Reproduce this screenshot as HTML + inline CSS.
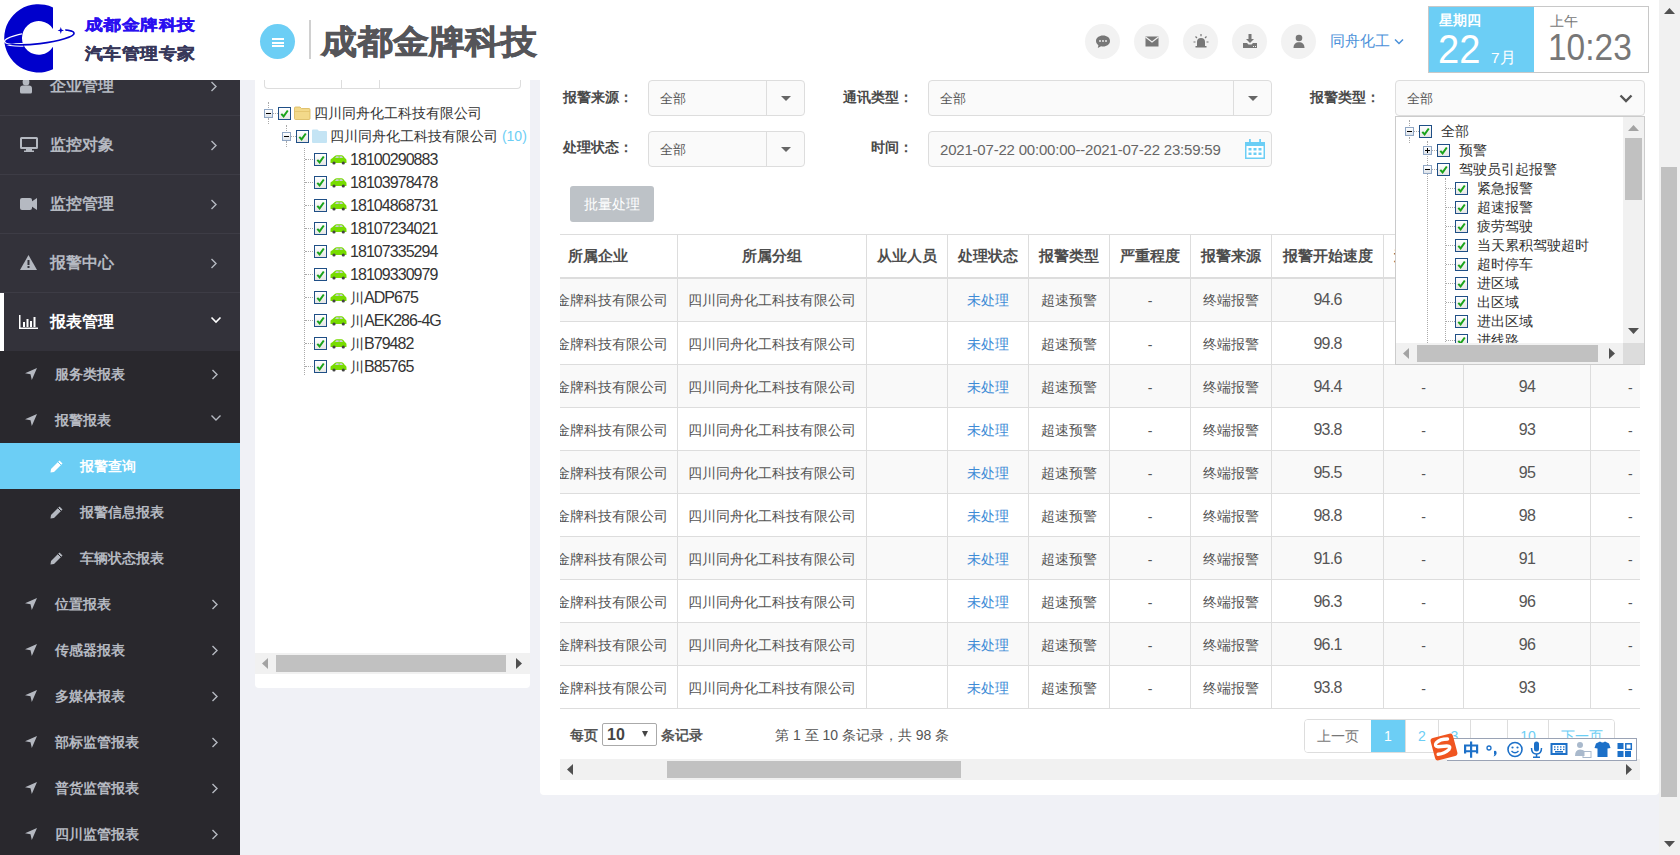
<!DOCTYPE html>
<html><head><meta charset="utf-8"><style>
*{box-sizing:border-box;margin:0;padding:0}
html,body{width:1680px;height:855px;overflow:hidden}
body{position:relative;background:#f0f1f6;font-family:"Liberation Sans",sans-serif;color:#555;font-size:14px}
.a{position:absolute}
.nw{white-space:nowrap}
#vs{left:1659px;top:0;width:21px;height:855px;background:#f1f1f1}
#vs .th{left:2px;top:167px;width:16px;height:630px;background:#c1c1c1}
#hd{left:0;top:0;width:1659px;height:80px;background:#fff}
#sb{left:0;top:80px;width:240px;height:775px;background:#29282d;overflow:hidden}
.mi{position:absolute;left:0;width:240px;height:59px;background:#33323a;border-bottom:1px solid #3d3c45;color:#b5b9c1;font-size:16px;font-weight:bold}
.mi .t{position:absolute;left:50px;top:0;line-height:58px;white-space:nowrap}
.si{position:absolute;left:0;width:240px;height:46px;color:#b5b9c1;font-size:14px;font-weight:bold}
.si .t{position:absolute;left:55px;top:0;line-height:46px;white-space:nowrap}
#tp{left:255px;top:40px;width:275px;height:648px;background:#fff;border-radius:4px}
#mp{left:540px;top:40px;width:1119px;height:755px;background:#fff;border-radius:4px}
.tr{position:absolute;height:23px;line-height:23px;font-size:14px;color:#333;white-space:nowrap}
.cb{position:absolute;width:13px;height:13px;border:1px solid #1f4f86;background:linear-gradient(#fff,#e6e6e6)}
.cb svg{position:absolute;left:1px;top:1px}
.pm{position:absolute;width:9px;height:9px;border:1px solid #8fa6c4;background:linear-gradient(#fff,#dde3ea)}
.pm:before{content:"";position:absolute;left:1px;top:3px;width:5px;height:1px;background:#000}
.pm.p:after{content:"";position:absolute;left:3px;top:1px;width:1px;height:5px;background:#000}
.dv{position:absolute;border-left:1px dotted #aaa;width:0}
.dh{position:absolute;border-top:1px dotted #aaa;height:0}
.lbl{position:absolute;font-size:14px;font-weight:bold;color:#4a4a4a;white-space:nowrap;line-height:20px}
.sel{position:absolute;height:36px;border:1px solid #ddd;border-radius:4px;background:#fafafa}
.sel .v{position:absolute;left:11px;top:0;line-height:36px;font-size:13px;color:#555}
.sel .dvd{position:absolute;top:0;width:1px;height:34px;background:#ddd}
.caret{position:absolute;width:0;height:0;border-left:5px solid transparent;border-right:5px solid transparent;border-top:5px solid #666}
table{border-collapse:collapse;table-layout:fixed}
td,th{border:1px solid #ddd;text-align:center;white-space:nowrap;overflow:hidden;font-size:14px;color:#555;padding:0}
th{height:43px;padding-top:2px;font-weight:bold;font-size:15px;border-bottom:2px solid #ddd;color:#4d4d4d}
td{height:43px;padding-top:3px}
tr.r1 td{height:44px}
tr.odd td{background:#f9f9f9}
.blue{color:#3d8bd6}
.n{font-size:16px;letter-spacing:-0.95px}
.nt{font-size:16px;letter-spacing:-0.75px;position:relative;top:-1px}
</style></head><body>
<div id="mp" class="a"></div><div class="lbl" style="left:563px;top:87px">报警来源：</div><div class="sel" style="left:648px;top:80px;width:157px"><div class="v">全部</div><div class="dvd" style="left:117px"></div><div class="caret" style="left:132px;top:15px"></div></div><div class="lbl" style="left:843px;top:87px">通讯类型：</div><div class="sel" style="left:928px;top:80px;width:344px"><div class="v">全部</div><div class="dvd" style="left:304px"></div><div class="caret" style="left:319px;top:15px"></div></div><div class="lbl" style="left:1310px;top:87px">报警类型：</div><div class="sel" style="left:1395px;top:80px;width:250px;height:36px"><div class="v">全部</div></div><svg class="a" style="left:1619px;top:94px" width="14" height="10" viewBox="0 0 14 10"><path d="M1.5 1.5 L7 7 L12.5 1.5" fill="none" stroke="#555" stroke-width="2.4"/></svg><div class="lbl" style="left:563px;top:137px">处理状态：</div><div class="sel" style="left:648px;top:131px;width:157px"><div class="v">全部</div><div class="dvd" style="left:117px"></div><div class="caret" style="left:132px;top:15px"></div></div><div class="lbl" style="left:871px;top:137px">时间：</div><div class="sel" style="left:928px;top:131px;width:344px;height:36px"><div class="v" style="font-size:15px;left:11px;letter-spacing:-0.2px;color:#666">2021-07-22 00:00:00--2021-07-22 23:59:59</div></div><svg class="a" style="left:1245px;top:139px" width="20" height="20" viewBox="0 0 20 20">
<path d="M0 3 H20 V20 H0Z" fill="#6ccef5"/><rect x="1.5" y="7" width="17" height="11.5" fill="#fff"/>
<rect x="4" y="0" width="1.8" height="5" fill="#6ccef5"/><rect x="14.2" y="0" width="1.8" height="5" fill="#6ccef5"/>
<g fill="#6ccef5"><rect x="3.5" y="9" width="3" height="2.5"/><rect x="8.5" y="9" width="3" height="2.5"/><rect x="13.5" y="9" width="3" height="2.5"/>
<rect x="3.5" y="13.5" width="3" height="2.5"/><rect x="8.5" y="13.5" width="3" height="2.5"/><rect x="13.5" y="13.5" width="3" height="2.5"/></g></svg><div class="a" style="left:570px;top:186px;width:84px;height:36px;background:#bdc2c7;border-radius:3px;color:#fff;font-size:14px;line-height:36px;text-align:center">批量处理</div><div class="a" style="left:560px;top:234px;width:1080px;height:475px;overflow:hidden"><table style="position:absolute;left:-43px;top:0;width:1224px"><colgroup><col style="width:160px"><col style="width:189px"><col style="width:81px"><col style="width:81px"><col style="width:81px"><col style="width:81px"><col style="width:81px"><col style="width:112px"><col style="width:80px"><col style="width:127px"><col style="width:150px"></colgroup><tr><th>所属企业</th><th>所属分组</th><th>从业人员</th><th>处理状态</th><th>报警类型</th><th>严重程度</th><th>报警来源</th><th>报警开始速度</th><th>速度限值</th><th>报警最高速度</th><th>报警持续</th></tr><tr class="odd r1"><td>成都金牌科技有限公司</td><td>四川同舟化工科技有限公司</td><td></td><td class="blue">未处理</td><td>超速预警</td><td>-</td><td>终端报警</td><td><span class="nt">94.6</span></td><td>-</td><td><span class="nt">94</span></td><td style="text-align:left;padding-left:37px">-</td></tr><tr><td>成都金牌科技有限公司</td><td>四川同舟化工科技有限公司</td><td></td><td class="blue">未处理</td><td>超速预警</td><td>-</td><td>终端报警</td><td><span class="nt">99.8</span></td><td>-</td><td><span class="nt">99</span></td><td style="text-align:left;padding-left:37px">-</td></tr><tr class="odd"><td>成都金牌科技有限公司</td><td>四川同舟化工科技有限公司</td><td></td><td class="blue">未处理</td><td>超速预警</td><td>-</td><td>终端报警</td><td><span class="nt">94.4</span></td><td>-</td><td><span class="nt">94</span></td><td style="text-align:left;padding-left:37px">-</td></tr><tr><td>成都金牌科技有限公司</td><td>四川同舟化工科技有限公司</td><td></td><td class="blue">未处理</td><td>超速预警</td><td>-</td><td>终端报警</td><td><span class="nt">93.8</span></td><td>-</td><td><span class="nt">93</span></td><td style="text-align:left;padding-left:37px">-</td></tr><tr class="odd"><td>成都金牌科技有限公司</td><td>四川同舟化工科技有限公司</td><td></td><td class="blue">未处理</td><td>超速预警</td><td>-</td><td>终端报警</td><td><span class="nt">95.5</span></td><td>-</td><td><span class="nt">95</span></td><td style="text-align:left;padding-left:37px">-</td></tr><tr><td>成都金牌科技有限公司</td><td>四川同舟化工科技有限公司</td><td></td><td class="blue">未处理</td><td>超速预警</td><td>-</td><td>终端报警</td><td><span class="nt">98.8</span></td><td>-</td><td><span class="nt">98</span></td><td style="text-align:left;padding-left:37px">-</td></tr><tr class="odd"><td>成都金牌科技有限公司</td><td>四川同舟化工科技有限公司</td><td></td><td class="blue">未处理</td><td>超速预警</td><td>-</td><td>终端报警</td><td><span class="nt">91.6</span></td><td>-</td><td><span class="nt">91</span></td><td style="text-align:left;padding-left:37px">-</td></tr><tr><td>成都金牌科技有限公司</td><td>四川同舟化工科技有限公司</td><td></td><td class="blue">未处理</td><td>超速预警</td><td>-</td><td>终端报警</td><td><span class="nt">96.3</span></td><td>-</td><td><span class="nt">96</span></td><td style="text-align:left;padding-left:37px">-</td></tr><tr class="odd"><td>成都金牌科技有限公司</td><td>四川同舟化工科技有限公司</td><td></td><td class="blue">未处理</td><td>超速预警</td><td>-</td><td>终端报警</td><td><span class="nt">96.1</span></td><td>-</td><td><span class="nt">96</span></td><td style="text-align:left;padding-left:37px">-</td></tr><tr><td>成都金牌科技有限公司</td><td>四川同舟化工科技有限公司</td><td></td><td class="blue">未处理</td><td>超速预警</td><td>-</td><td>终端报警</td><td><span class="nt">93.8</span></td><td>-</td><td><span class="nt">93</span></td><td style="text-align:left;padding-left:37px">-</td></tr></table></div><div class="a nw" style="left:570px;top:725px;font-size:14px;font-weight:bold;color:#555;line-height:20px">每页</div><div class="a" style="left:602px;top:723px;width:55px;height:23px;border:1px solid #aaa;border-radius:2px;background:#fff"></div><div class="a nw" style="left:607px;top:725px;font-size:16px;font-weight:bold;color:#444;line-height:20px">10</div><div class="a" style="left:642px;top:731px;width:0;height:0;border-left:3.5px solid transparent;border-right:3.5px solid transparent;border-top:6px solid #444"></div><div class="a nw" style="left:661px;top:725px;font-size:14px;font-weight:bold;color:#555;line-height:20px">条记录</div><div class="a nw" style="left:775px;top:725px;font-size:14px;color:#555;line-height:20px">第 1 至 10 条记录，共 98 条</div><div class="a" style="left:1304px;top:719px;width:311px;height:34px;border:1px solid #ddd;border-radius:4px;background:#fff;overflow:hidden"><div class="a" style="left:-1px;top:0;width:67px;height:32px;background:#fff;color:#777;text-align:center;line-height:32px;font-size:14px">上一页</div><div class="a" style="left:66px;top:0;width:34px;height:32px;background:#6ccef5;color:#fff;text-align:center;line-height:32px;font-size:14px">1</div><div class="a" style="left:100px;top:0;width:33px;height:32px;background:#fff;color:#6ccef5;border-left:1px solid #ddd;text-align:center;line-height:32px;font-size:14px">2</div><div class="a" style="left:133px;top:0;width:32px;height:32px;background:#fff;color:#6ccef5;border-left:1px solid #ddd;text-align:center;line-height:32px;font-size:14px">3</div><div class="a" style="left:165px;top:0;width:37px;height:32px;background:#fff;color:#6ccef5;border-left:1px solid #ddd;text-align:center;line-height:32px;font-size:14px">…</div><div class="a" style="left:202px;top:0;width:41px;height:32px;background:#fff;color:#6ccef5;border-left:1px solid #ddd;text-align:center;line-height:32px;font-size:14px">10</div><div class="a" style="left:243px;top:0;width:67px;height:32px;background:#fff;color:#6ccef5;border-left:1px solid #ddd;text-align:center;line-height:32px;font-size:14px">下一页</div></div><div class="a" style="left:560px;top:759px;width:1080px;height:21px;background:#f1f1f1"></div><div class="a" style="left:667px;top:761px;width:294px;height:17px;background:#c1c1c1"></div><svg class="a" style="left:567px;top:764px" width="6" height="11" viewBox="0 0 6 11"><path d="M6 0 L0 5.5 L6 11Z" fill="#505050"/></svg><svg class="a" style="left:1626px;top:764px" width="6" height="11" viewBox="0 0 6 11"><path d="M0 0 L6 5.5 L0 11Z" fill="#505050"/></svg><div class="a" style="left:1395px;top:116px;width:250px;height:249px;border:1px solid #ccc;background:#fff;overflow:hidden"><div class="dv" style="left:31px;top:24px;height:230px"></div><div class="dv" style="left:49px;top:61px;height:180px"></div><div class="dv" style="left:13px;top:3px;height:6px"></div><div class="dv" style="left:13px;top:20px;height:6px"></div><div class="pm" style="left:9px;top:10px"></div><div class="dh" style="left:18px;top:14px;width:5px"></div><div class="cb" style="left:23px;top:7.5px"><svg width="11" height="11" viewBox="0 0 11 11"><path d="M1.3 4.8 L3.6 7.4 L7.8 1.5" fill="none" stroke="#1aa31a" stroke-width="2"/></svg></div><div class="a nw" style="left:45px;top:4px;line-height:20px;font-size:14px;color:#333">全部</div><div class="pm p" style="left:27px;top:29px"></div><div class="dh" style="left:36px;top:33px;width:5px"></div><div class="cb" style="left:41px;top:26.5px"><svg width="11" height="11" viewBox="0 0 11 11"><path d="M1.3 4.8 L3.6 7.4 L7.8 1.5" fill="none" stroke="#1aa31a" stroke-width="2"/></svg></div><div class="a nw" style="left:63px;top:23px;line-height:20px;font-size:14px;color:#333">预警</div><div class="pm" style="left:27px;top:48px"></div><div class="dh" style="left:36px;top:52px;width:5px"></div><div class="cb" style="left:41px;top:45.5px"><svg width="11" height="11" viewBox="0 0 11 11"><path d="M1.3 4.8 L3.6 7.4 L7.8 1.5" fill="none" stroke="#1aa31a" stroke-width="2"/></svg></div><div class="a nw" style="left:63px;top:42px;line-height:20px;font-size:14px;color:#333">驾驶员引起报警</div><div class="dh" style="left:50px;top:71px;width:9px"></div><div class="cb" style="left:59px;top:64.5px"><svg width="11" height="11" viewBox="0 0 11 11"><path d="M1.3 4.8 L3.6 7.4 L7.8 1.5" fill="none" stroke="#1aa31a" stroke-width="2"/></svg></div><div class="a nw" style="left:81px;top:61px;line-height:20px;font-size:14px;color:#333">紧急报警</div><div class="dh" style="left:50px;top:90px;width:9px"></div><div class="cb" style="left:59px;top:83.5px"><svg width="11" height="11" viewBox="0 0 11 11"><path d="M1.3 4.8 L3.6 7.4 L7.8 1.5" fill="none" stroke="#1aa31a" stroke-width="2"/></svg></div><div class="a nw" style="left:81px;top:80px;line-height:20px;font-size:14px;color:#333">超速报警</div><div class="dh" style="left:50px;top:109px;width:9px"></div><div class="cb" style="left:59px;top:102.5px"><svg width="11" height="11" viewBox="0 0 11 11"><path d="M1.3 4.8 L3.6 7.4 L7.8 1.5" fill="none" stroke="#1aa31a" stroke-width="2"/></svg></div><div class="a nw" style="left:81px;top:99px;line-height:20px;font-size:14px;color:#333">疲劳驾驶</div><div class="dh" style="left:50px;top:128px;width:9px"></div><div class="cb" style="left:59px;top:121.5px"><svg width="11" height="11" viewBox="0 0 11 11"><path d="M1.3 4.8 L3.6 7.4 L7.8 1.5" fill="none" stroke="#1aa31a" stroke-width="2"/></svg></div><div class="a nw" style="left:81px;top:118px;line-height:20px;font-size:14px;color:#333">当天累积驾驶超时</div><div class="dh" style="left:50px;top:147px;width:9px"></div><div class="cb" style="left:59px;top:140.5px"><svg width="11" height="11" viewBox="0 0 11 11"><path d="M1.3 4.8 L3.6 7.4 L7.8 1.5" fill="none" stroke="#1aa31a" stroke-width="2"/></svg></div><div class="a nw" style="left:81px;top:137px;line-height:20px;font-size:14px;color:#333">超时停车</div><div class="dh" style="left:50px;top:166px;width:9px"></div><div class="cb" style="left:59px;top:159.5px"><svg width="11" height="11" viewBox="0 0 11 11"><path d="M1.3 4.8 L3.6 7.4 L7.8 1.5" fill="none" stroke="#1aa31a" stroke-width="2"/></svg></div><div class="a nw" style="left:81px;top:156px;line-height:20px;font-size:14px;color:#333">进区域</div><div class="dh" style="left:50px;top:185px;width:9px"></div><div class="cb" style="left:59px;top:178.5px"><svg width="11" height="11" viewBox="0 0 11 11"><path d="M1.3 4.8 L3.6 7.4 L7.8 1.5" fill="none" stroke="#1aa31a" stroke-width="2"/></svg></div><div class="a nw" style="left:81px;top:175px;line-height:20px;font-size:14px;color:#333">出区域</div><div class="dh" style="left:50px;top:204px;width:9px"></div><div class="cb" style="left:59px;top:197.5px"><svg width="11" height="11" viewBox="0 0 11 11"><path d="M1.3 4.8 L3.6 7.4 L7.8 1.5" fill="none" stroke="#1aa31a" stroke-width="2"/></svg></div><div class="a nw" style="left:81px;top:194px;line-height:20px;font-size:14px;color:#333">进出区域</div><div class="dh" style="left:50px;top:223px;width:9px"></div><div class="cb" style="left:59px;top:216.5px"><svg width="11" height="11" viewBox="0 0 11 11"><path d="M1.3 4.8 L3.6 7.4 L7.8 1.5" fill="none" stroke="#1aa31a" stroke-width="2"/></svg></div><div class="a nw" style="left:81px;top:213px;line-height:20px;font-size:14px;color:#333">进线路</div><div class="a" style="left:227px;top:0;width:21px;height:227px;background:#f1f1f1"></div><div class="a" style="left:229px;top:21px;width:17px;height:62px;background:#c1c1c1"></div><svg class="a" style="left:232px;top:8px" width="11" height="6" viewBox="0 0 11 6"><path d="M0 6 L5.5 0 L11 6Z" fill="#a3a3a3"/></svg><svg class="a" style="left:232px;top:211px" width="11" height="6" viewBox="0 0 11 6"><path d="M0 0 L5.5 6 L11 0Z" fill="#505050"/></svg><div class="a" style="left:0;top:226px;width:249px;height:21px;background:#f1f1f1"></div><div class="a" style="left:227px;top:226px;width:21px;height:21px;background:#dcdcdc"></div><div class="a" style="left:21px;top:228px;width:181px;height:17px;background:#c1c1c1"></div><svg class="a" style="left:7px;top:231px" width="6" height="11" viewBox="0 0 6 11"><path d="M6 0 L0 5.5 L6 11Z" fill="#a3a3a3"/></svg><svg class="a" style="left:213px;top:231px" width="6" height="11" viewBox="0 0 6 11"><path d="M0 0 L6 5.5 L0 11Z" fill="#505050"/></svg></div><div id="tp" class="a"></div><div class="a" style="left:264px;top:40px;width:257px;height:49px;border:1px solid #ddd;border-top:none;border-radius:0 0 4px 4px"></div><div class="a" style="left:341px;top:40px;width:1px;height:48px;background:#ddd"></div><div class="a" style="left:379px;top:40px;width:1px;height:48px;background:#ddd"></div><div class="dv" style="left:268px;top:102px;height:6px"></div><div class="dv" style="left:268px;top:118px;height:6px"></div><div class="dh" style="left:273px;top:113px;width:5px"></div><div class="pm" style="left:264px;top:109px"></div><div class="cb" style="left:278px;top:107px"><svg width="11" height="11" viewBox="0 0 11 11"><path d="M1.3 4.8 L3.6 7.4 L7.8 1.5" fill="none" stroke="#1aa31a" stroke-width="2"/></svg></div><div class="a" style="left:294px;top:106px"><svg class="a" width="17" height="14" viewBox="0 0 17 14"><path d="M0.5 2 Q0.5 1 1.5 1 H6 L7.5 2.5 H15 Q16 2.5 16 3.5 V12.5 Q16 13.5 15 13.5 H1.5 Q0.5 13.5 0.5 12.5Z" fill="#f3d98a" stroke="#d9b75a" stroke-width="0.8"/><path d="M0.5 5.5 H16" stroke="#e2c36c" stroke-width="0.8"/></svg></div><div class="tr" style="left:314px;top:102px">四川同舟化工科技有限公司</div><div class="dv" style="left:286px;top:125px;height:6px"></div><div class="dv" style="left:286px;top:141px;height:6px"></div><div class="dh" style="left:291px;top:136px;width:5px"></div><div class="pm" style="left:282px;top:132px"></div><div class="cb" style="left:296px;top:130px"><svg width="11" height="11" viewBox="0 0 11 11"><path d="M1.3 4.8 L3.6 7.4 L7.8 1.5" fill="none" stroke="#1aa31a" stroke-width="2"/></svg></div><div class="a" style="left:312px;top:129px"><svg class="a" width="15" height="14" viewBox="0 0 15 14"><path d="M0 1.5 Q0 0.5 1 0.5 H5.5 L7 2 H14 Q15 2 15 3 V13 Q15 14 14 14 H1 Q0 14 0 13Z" fill="#c4e4f4"/></svg></div><div class="tr" style="left:330px;top:125px">四川同舟化工科技有限公司 <span style="color:#6ccef5">(10)</span></div><div class="dv" style="left:304px;top:148px;height:227px"></div><div class="dh" style="left:305px;top:159px;width:8px"></div><div class="cb" style="left:314px;top:153px"><svg width="11" height="11" viewBox="0 0 11 11"><path d="M1.3 4.8 L3.6 7.4 L7.8 1.5" fill="none" stroke="#1aa31a" stroke-width="2"/></svg></div><div class="a" style="left:330px;top:155px"><svg class="a" width="17" height="10" viewBox="0 0 17 10"><path d="M0.5 5 Q0.5 3.8 2 3.5 L4.5 1.2 Q5.5 0.3 7 0.3 H11.5 Q12.5 0.3 13.5 1.3 L15 3.2 Q16.5 3.8 16.5 5.5 V7.5 Q16.5 8 16 8 H1 Q0.5 8 0.5 7.5Z" fill="#78dc00"/><path d="M5 3 L6.3 1.3 H8.7 V3Z M9.5 1.3 H12 L13 3 H9.5Z" fill="#c8ccd8"/><circle cx="4" cy="8" r="1.6" fill="#444"/><circle cx="13.3" cy="8" r="1.6" fill="#444"/></svg></div><div class="tr" style="left:350px;top:148px"><span class="n">18100290883</span></div><div class="dh" style="left:305px;top:182px;width:8px"></div><div class="cb" style="left:314px;top:176px"><svg width="11" height="11" viewBox="0 0 11 11"><path d="M1.3 4.8 L3.6 7.4 L7.8 1.5" fill="none" stroke="#1aa31a" stroke-width="2"/></svg></div><div class="a" style="left:330px;top:178px"><svg class="a" width="17" height="10" viewBox="0 0 17 10"><path d="M0.5 5 Q0.5 3.8 2 3.5 L4.5 1.2 Q5.5 0.3 7 0.3 H11.5 Q12.5 0.3 13.5 1.3 L15 3.2 Q16.5 3.8 16.5 5.5 V7.5 Q16.5 8 16 8 H1 Q0.5 8 0.5 7.5Z" fill="#78dc00"/><path d="M5 3 L6.3 1.3 H8.7 V3Z M9.5 1.3 H12 L13 3 H9.5Z" fill="#c8ccd8"/><circle cx="4" cy="8" r="1.6" fill="#444"/><circle cx="13.3" cy="8" r="1.6" fill="#444"/></svg></div><div class="tr" style="left:350px;top:171px"><span class="n">18103978478</span></div><div class="dh" style="left:305px;top:205px;width:8px"></div><div class="cb" style="left:314px;top:199px"><svg width="11" height="11" viewBox="0 0 11 11"><path d="M1.3 4.8 L3.6 7.4 L7.8 1.5" fill="none" stroke="#1aa31a" stroke-width="2"/></svg></div><div class="a" style="left:330px;top:201px"><svg class="a" width="17" height="10" viewBox="0 0 17 10"><path d="M0.5 5 Q0.5 3.8 2 3.5 L4.5 1.2 Q5.5 0.3 7 0.3 H11.5 Q12.5 0.3 13.5 1.3 L15 3.2 Q16.5 3.8 16.5 5.5 V7.5 Q16.5 8 16 8 H1 Q0.5 8 0.5 7.5Z" fill="#78dc00"/><path d="M5 3 L6.3 1.3 H8.7 V3Z M9.5 1.3 H12 L13 3 H9.5Z" fill="#c8ccd8"/><circle cx="4" cy="8" r="1.6" fill="#444"/><circle cx="13.3" cy="8" r="1.6" fill="#444"/></svg></div><div class="tr" style="left:350px;top:194px"><span class="n">18104868731</span></div><div class="dh" style="left:305px;top:228px;width:8px"></div><div class="cb" style="left:314px;top:222px"><svg width="11" height="11" viewBox="0 0 11 11"><path d="M1.3 4.8 L3.6 7.4 L7.8 1.5" fill="none" stroke="#1aa31a" stroke-width="2"/></svg></div><div class="a" style="left:330px;top:224px"><svg class="a" width="17" height="10" viewBox="0 0 17 10"><path d="M0.5 5 Q0.5 3.8 2 3.5 L4.5 1.2 Q5.5 0.3 7 0.3 H11.5 Q12.5 0.3 13.5 1.3 L15 3.2 Q16.5 3.8 16.5 5.5 V7.5 Q16.5 8 16 8 H1 Q0.5 8 0.5 7.5Z" fill="#78dc00"/><path d="M5 3 L6.3 1.3 H8.7 V3Z M9.5 1.3 H12 L13 3 H9.5Z" fill="#c8ccd8"/><circle cx="4" cy="8" r="1.6" fill="#444"/><circle cx="13.3" cy="8" r="1.6" fill="#444"/></svg></div><div class="tr" style="left:350px;top:217px"><span class="n">18107234021</span></div><div class="dh" style="left:305px;top:251px;width:8px"></div><div class="cb" style="left:314px;top:245px"><svg width="11" height="11" viewBox="0 0 11 11"><path d="M1.3 4.8 L3.6 7.4 L7.8 1.5" fill="none" stroke="#1aa31a" stroke-width="2"/></svg></div><div class="a" style="left:330px;top:247px"><svg class="a" width="17" height="10" viewBox="0 0 17 10"><path d="M0.5 5 Q0.5 3.8 2 3.5 L4.5 1.2 Q5.5 0.3 7 0.3 H11.5 Q12.5 0.3 13.5 1.3 L15 3.2 Q16.5 3.8 16.5 5.5 V7.5 Q16.5 8 16 8 H1 Q0.5 8 0.5 7.5Z" fill="#78dc00"/><path d="M5 3 L6.3 1.3 H8.7 V3Z M9.5 1.3 H12 L13 3 H9.5Z" fill="#c8ccd8"/><circle cx="4" cy="8" r="1.6" fill="#444"/><circle cx="13.3" cy="8" r="1.6" fill="#444"/></svg></div><div class="tr" style="left:350px;top:240px"><span class="n">18107335294</span></div><div class="dh" style="left:305px;top:274px;width:8px"></div><div class="cb" style="left:314px;top:268px"><svg width="11" height="11" viewBox="0 0 11 11"><path d="M1.3 4.8 L3.6 7.4 L7.8 1.5" fill="none" stroke="#1aa31a" stroke-width="2"/></svg></div><div class="a" style="left:330px;top:270px"><svg class="a" width="17" height="10" viewBox="0 0 17 10"><path d="M0.5 5 Q0.5 3.8 2 3.5 L4.5 1.2 Q5.5 0.3 7 0.3 H11.5 Q12.5 0.3 13.5 1.3 L15 3.2 Q16.5 3.8 16.5 5.5 V7.5 Q16.5 8 16 8 H1 Q0.5 8 0.5 7.5Z" fill="#78dc00"/><path d="M5 3 L6.3 1.3 H8.7 V3Z M9.5 1.3 H12 L13 3 H9.5Z" fill="#c8ccd8"/><circle cx="4" cy="8" r="1.6" fill="#444"/><circle cx="13.3" cy="8" r="1.6" fill="#444"/></svg></div><div class="tr" style="left:350px;top:263px"><span class="n">18109330979</span></div><div class="dh" style="left:305px;top:297px;width:8px"></div><div class="cb" style="left:314px;top:291px"><svg width="11" height="11" viewBox="0 0 11 11"><path d="M1.3 4.8 L3.6 7.4 L7.8 1.5" fill="none" stroke="#1aa31a" stroke-width="2"/></svg></div><div class="a" style="left:330px;top:293px"><svg class="a" width="17" height="10" viewBox="0 0 17 10"><path d="M0.5 5 Q0.5 3.8 2 3.5 L4.5 1.2 Q5.5 0.3 7 0.3 H11.5 Q12.5 0.3 13.5 1.3 L15 3.2 Q16.5 3.8 16.5 5.5 V7.5 Q16.5 8 16 8 H1 Q0.5 8 0.5 7.5Z" fill="#78dc00"/><path d="M5 3 L6.3 1.3 H8.7 V3Z M9.5 1.3 H12 L13 3 H9.5Z" fill="#c8ccd8"/><circle cx="4" cy="8" r="1.6" fill="#444"/><circle cx="13.3" cy="8" r="1.6" fill="#444"/></svg></div><div class="tr" style="left:350px;top:286px">川<span class="n">ADP675</span></div><div class="dh" style="left:305px;top:320px;width:8px"></div><div class="cb" style="left:314px;top:314px"><svg width="11" height="11" viewBox="0 0 11 11"><path d="M1.3 4.8 L3.6 7.4 L7.8 1.5" fill="none" stroke="#1aa31a" stroke-width="2"/></svg></div><div class="a" style="left:330px;top:316px"><svg class="a" width="17" height="10" viewBox="0 0 17 10"><path d="M0.5 5 Q0.5 3.8 2 3.5 L4.5 1.2 Q5.5 0.3 7 0.3 H11.5 Q12.5 0.3 13.5 1.3 L15 3.2 Q16.5 3.8 16.5 5.5 V7.5 Q16.5 8 16 8 H1 Q0.5 8 0.5 7.5Z" fill="#78dc00"/><path d="M5 3 L6.3 1.3 H8.7 V3Z M9.5 1.3 H12 L13 3 H9.5Z" fill="#c8ccd8"/><circle cx="4" cy="8" r="1.6" fill="#444"/><circle cx="13.3" cy="8" r="1.6" fill="#444"/></svg></div><div class="tr" style="left:350px;top:309px">川<span class="n">AEK286-4G</span></div><div class="dh" style="left:305px;top:343px;width:8px"></div><div class="cb" style="left:314px;top:337px"><svg width="11" height="11" viewBox="0 0 11 11"><path d="M1.3 4.8 L3.6 7.4 L7.8 1.5" fill="none" stroke="#1aa31a" stroke-width="2"/></svg></div><div class="a" style="left:330px;top:339px"><svg class="a" width="17" height="10" viewBox="0 0 17 10"><path d="M0.5 5 Q0.5 3.8 2 3.5 L4.5 1.2 Q5.5 0.3 7 0.3 H11.5 Q12.5 0.3 13.5 1.3 L15 3.2 Q16.5 3.8 16.5 5.5 V7.5 Q16.5 8 16 8 H1 Q0.5 8 0.5 7.5Z" fill="#78dc00"/><path d="M5 3 L6.3 1.3 H8.7 V3Z M9.5 1.3 H12 L13 3 H9.5Z" fill="#c8ccd8"/><circle cx="4" cy="8" r="1.6" fill="#444"/><circle cx="13.3" cy="8" r="1.6" fill="#444"/></svg></div><div class="tr" style="left:350px;top:332px">川<span class="n">B79482</span></div><div class="dh" style="left:305px;top:366px;width:8px"></div><div class="cb" style="left:314px;top:360px"><svg width="11" height="11" viewBox="0 0 11 11"><path d="M1.3 4.8 L3.6 7.4 L7.8 1.5" fill="none" stroke="#1aa31a" stroke-width="2"/></svg></div><div class="a" style="left:330px;top:362px"><svg class="a" width="17" height="10" viewBox="0 0 17 10"><path d="M0.5 5 Q0.5 3.8 2 3.5 L4.5 1.2 Q5.5 0.3 7 0.3 H11.5 Q12.5 0.3 13.5 1.3 L15 3.2 Q16.5 3.8 16.5 5.5 V7.5 Q16.5 8 16 8 H1 Q0.5 8 0.5 7.5Z" fill="#78dc00"/><path d="M5 3 L6.3 1.3 H8.7 V3Z M9.5 1.3 H12 L13 3 H9.5Z" fill="#c8ccd8"/><circle cx="4" cy="8" r="1.6" fill="#444"/><circle cx="13.3" cy="8" r="1.6" fill="#444"/></svg></div><div class="tr" style="left:350px;top:355px">川<span class="n">B85765</span></div><div class="a" style="left:255px;top:653px;width:275px;height:21px;background:#f1f1f1"></div><div class="a" style="left:276px;top:655px;width:230px;height:17px;background:#c1c1c1"></div><svg class="a" style="left:262px;top:658px" width="6" height="11" viewBox="0 0 6 11"><path d="M6 0 L0 5.5 L6 11Z" fill="#a3a3a3"/></svg><svg class="a" style="left:516px;top:658px" width="6" height="11" viewBox="0 0 6 11"><path d="M0 0 L6 5.5 L0 11Z" fill="#505050"/></svg><div id="sb" class="a"><div class="mi" style="top:-23px"><svg class="a" style="left:20px;top:18px" width="12" height="19" viewBox="0 0 12 19"><ellipse cx="6" cy="7" rx="3.4" ry="3.6" fill="#b5b9c1"/><path d="M0 17 V13.5 Q0 10.5 3 10.5 H9 Q12 10.5 12 13.5 V17 Q12 18.5 10.5 18.5 H1.5 Q0 18.5 0 17Z" fill="#b5b9c1"/></svg><div class="t">企业管理</div><svg class="a" style="left:210px;top:24px" width="8" height="11" viewBox="0 0 8 11"><path d="M1.5 1 L6 5.5 L1.5 10" fill="none" stroke="#b5b9c1" stroke-width="1.4"/></svg></div><div class="mi" style="top:36px"><svg class="a" style="left:20px;top:21px" width="18" height="15" viewBox="0 0 18 15"><path fill-rule="evenodd" fill="#b5b9c1" d="M0 1.5Q0 0 1.5 0h15Q18 0 18 1.5v9Q18 12 16.5 12h-15Q0 12 0 10.5zM2 2v8h14V2z"/><path fill="#b5b9c1" d="M6 12h6v1.5h2V15H4v-1.5h2z"/></svg><div class="t">监控对象</div><svg class="a" style="left:210px;top:24px" width="8" height="11" viewBox="0 0 8 11"><path d="M1.5 1 L6 5.5 L1.5 10" fill="none" stroke="#b5b9c1" stroke-width="1.4"/></svg></div><div class="mi" style="top:95px"><svg class="a" style="left:20px;top:23px" width="17" height="12" viewBox="0 0 17 12"><rect x="0" y="0" width="12" height="12" rx="2" fill="#b5b9c1"/><path d="M11 4 L17 0 V12 L11 8Z" fill="#b5b9c1"/></svg><div class="t">监控管理</div><svg class="a" style="left:210px;top:24px" width="8" height="11" viewBox="0 0 8 11"><path d="M1.5 1 L6 5.5 L1.5 10" fill="none" stroke="#b5b9c1" stroke-width="1.4"/></svg></div><div class="mi" style="top:154px"><svg class="a" style="left:20px;top:21px" width="17" height="15" viewBox="0 0 17 15"><path d="M8.5 0 L17 15 H0Z" fill="#b5b9c1"/><rect x="7.5" y="5" width="2" height="5" fill="#33323a"/><rect x="7.5" y="11" width="2" height="2" fill="#33323a"/></svg><div class="t">报警中心</div><svg class="a" style="left:210px;top:24px" width="8" height="11" viewBox="0 0 8 11"><path d="M1.5 1 L6 5.5 L1.5 10" fill="none" stroke="#b5b9c1" stroke-width="1.4"/></svg></div><div class="mi" style="top:213px;height:58px;border-bottom:none;color:#fff"><svg class="a" style="left:19px;top:22px" width="19" height="14" viewBox="0 0 19 14"><path d="M0.75 0V13.25H19" fill="none" stroke="#fff" stroke-width="1.5"/><rect x="4" y="7" width="2" height="5" fill="#fff"/><rect x="7.5" y="4" width="2" height="8" fill="#fff"/><rect x="11" y="6" width="2" height="6" fill="#fff"/><rect x="14.5" y="2" width="2" height="10" fill="#fff"/></svg><div class="t">报表管理</div><div class="a" style="left:0;top:0;width:4px;height:58px;background:#fff"></div><svg class="a" style="left:209.5px;top:22.5px" width="12" height="8" viewBox="0 0 12 8"><path d="M1.5 1.5 L6 6 L10.5 1.5" fill="none" stroke="#fff" stroke-width="1.6"/></svg></div><div class="si" style="top:271px"><svg class="a" style="left:25px;top:17px" width="12" height="12" viewBox="0 0 12 12"><path d="M12 0 L0 5.2 L5.5 6.3 L6.8 12Z" fill="#b5b9c1"/></svg><div class="t">服务类报表</div><svg class="a" style="left:211px;top:18px" width="8" height="11" viewBox="0 0 8 11"><path d="M1.5 1 L6 5.5 L1.5 10" fill="none" stroke="#b5b9c1" stroke-width="1.4"/></svg></div><div class="si" style="top:317px"><svg class="a" style="left:25px;top:17px" width="12" height="12" viewBox="0 0 12 12"><path d="M12 0 L0 5.2 L5.5 6.3 L6.8 12Z" fill="#b5b9c1"/></svg><div class="t">报警报表</div><svg class="a" style="left:209.5px;top:16.5px" width="12" height="8" viewBox="0 0 12 8"><path d="M1.5 1.5 L6 6 L10.5 1.5" fill="none" stroke="#b5b9c1" stroke-width="1.4"/></svg></div><div class="si" style="top:363px;background:#6ccef5;color:#fff"><svg class="a" style="left:50px;top:17px" width="13" height="13" viewBox="0 0 13 13"><path d="M9.5 0.5 L12.5 3.5 L4 12 L0.5 12.5 L1 9Z" fill="#fff"/><path d="M8 2 L11 5" stroke="#6ccef5" stroke-width="1"/></svg><div class="t" style="left:80px">报警查询</div></div><div class="si" style="top:409px"><svg class="a" style="left:50px;top:17px" width="13" height="13" viewBox="0 0 13 13"><path d="M9.5 0.5 L12.5 3.5 L4 12 L0.5 12.5 L1 9Z" fill="#b5b9c1"/><path d="M8 2 L11 5" stroke="#29282d" stroke-width="1"/></svg><div class="t" style="left:80px">报警信息报表</div></div><div class="si" style="top:455px"><svg class="a" style="left:50px;top:17px" width="13" height="13" viewBox="0 0 13 13"><path d="M9.5 0.5 L12.5 3.5 L4 12 L0.5 12.5 L1 9Z" fill="#b5b9c1"/><path d="M8 2 L11 5" stroke="#29282d" stroke-width="1"/></svg><div class="t" style="left:80px">车辆状态报表</div></div><div class="si" style="top:501px"><svg class="a" style="left:25px;top:17px" width="12" height="12" viewBox="0 0 12 12"><path d="M12 0 L0 5.2 L5.5 6.3 L6.8 12Z" fill="#b5b9c1"/></svg><div class="t">位置报表</div><svg class="a" style="left:211px;top:18px" width="8" height="11" viewBox="0 0 8 11"><path d="M1.5 1 L6 5.5 L1.5 10" fill="none" stroke="#b5b9c1" stroke-width="1.4"/></svg></div><div class="si" style="top:547px"><svg class="a" style="left:25px;top:17px" width="12" height="12" viewBox="0 0 12 12"><path d="M12 0 L0 5.2 L5.5 6.3 L6.8 12Z" fill="#b5b9c1"/></svg><div class="t">传感器报表</div><svg class="a" style="left:211px;top:18px" width="8" height="11" viewBox="0 0 8 11"><path d="M1.5 1 L6 5.5 L1.5 10" fill="none" stroke="#b5b9c1" stroke-width="1.4"/></svg></div><div class="si" style="top:593px"><svg class="a" style="left:25px;top:17px" width="12" height="12" viewBox="0 0 12 12"><path d="M12 0 L0 5.2 L5.5 6.3 L6.8 12Z" fill="#b5b9c1"/></svg><div class="t">多媒体报表</div><svg class="a" style="left:211px;top:18px" width="8" height="11" viewBox="0 0 8 11"><path d="M1.5 1 L6 5.5 L1.5 10" fill="none" stroke="#b5b9c1" stroke-width="1.4"/></svg></div><div class="si" style="top:639px"><svg class="a" style="left:25px;top:17px" width="12" height="12" viewBox="0 0 12 12"><path d="M12 0 L0 5.2 L5.5 6.3 L6.8 12Z" fill="#b5b9c1"/></svg><div class="t">部标监管报表</div><svg class="a" style="left:211px;top:18px" width="8" height="11" viewBox="0 0 8 11"><path d="M1.5 1 L6 5.5 L1.5 10" fill="none" stroke="#b5b9c1" stroke-width="1.4"/></svg></div><div class="si" style="top:685px"><svg class="a" style="left:25px;top:17px" width="12" height="12" viewBox="0 0 12 12"><path d="M12 0 L0 5.2 L5.5 6.3 L6.8 12Z" fill="#b5b9c1"/></svg><div class="t">普货监管报表</div><svg class="a" style="left:211px;top:18px" width="8" height="11" viewBox="0 0 8 11"><path d="M1.5 1 L6 5.5 L1.5 10" fill="none" stroke="#b5b9c1" stroke-width="1.4"/></svg></div><div class="si" style="top:731px"><svg class="a" style="left:25px;top:17px" width="12" height="12" viewBox="0 0 12 12"><path d="M12 0 L0 5.2 L5.5 6.3 L6.8 12Z" fill="#b5b9c1"/></svg><div class="t">四川监管报表</div><svg class="a" style="left:211px;top:18px" width="8" height="11" viewBox="0 0 8 11"><path d="M1.5 1 L6 5.5 L1.5 10" fill="none" stroke="#b5b9c1" stroke-width="1.4"/></svg></div></div><div id="hd" class="a">
 <svg class="a" style="left:0;top:0" width="80" height="80" viewBox="0 0 80 80">
  <defs><clipPath id="cl1"><path d="M0 42 L22.5 39.3 V80 H0Z"/></clipPath>
  <clipPath id="cl3"><path d="M0 0 H22.5 V39.3 L0 42Z"/></clipPath>
  <clipPath id="cl2"><path d="M0 42 L66 34.1 V0 H80 V80 H0Z"/></clipPath></defs>
  <path fill="#0000cc" d="M53 7.5 A34.15 34.15 0 1 0 53 69.2 L53 46.8 A16.8 16.8 0 1 1 53 29 Z"/>
  <ellipse cx="39.3" cy="37.3" rx="35" ry="6.3" transform="rotate(-6.9 39.3 37.3)" fill="none" stroke="#fff" stroke-width="3.6" clip-path="url(#cl1)"/>
  <ellipse cx="39.3" cy="37.3" rx="35" ry="6.3" transform="rotate(-6.9 39.3 37.3)" fill="none" stroke="#fff" stroke-width="1.3" clip-path="url(#cl3)"/>
  <ellipse cx="39.3" cy="37.3" rx="35" ry="6.3" transform="rotate(-6.9 39.3 37.3)" fill="none" stroke="#0000cc" stroke-width="1.7" clip-path="url(#cl2)"/>
  <path fill="#0000cc" d="M60.8 27 L61.6 29.6 L64 30.4 L61.6 31.2 L60.8 34 L60 31.2 L57.6 30.4 L60 29.6Z"/>
 </svg>
 <div class="a" style="left:85px;top:15px;transform:scale(0.97,0.82);transform-origin:0 0;font-size:18.5px;font-weight:bold;color:#2a0ff0;-webkit-text-stroke:0.5px #2a0ff0;white-space:nowrap;line-height:24px">成都金牌科技</div>
 <div class="a" style="left:85px;top:43px;transform:scale(0.97,0.87);transform-origin:0 0;font-size:18.5px;font-weight:bold;color:#38385a;-webkit-text-stroke:0.5px #38385a;white-space:nowrap;line-height:24px">汽车管理专家</div>
 <div class="a" style="left:260px;top:24px;width:35px;height:35px;border-radius:50%;background:#6ccef5"></div>
 <div class="a" style="left:272px;top:38px;width:12px;height:2px;background:#fff"></div>
 <div class="a" style="left:272px;top:41.5px;width:12px;height:2px;background:#fff"></div>
 <div class="a" style="left:272px;top:45px;width:12px;height:2px;background:#fff"></div>
 <div class="a" style="left:309px;top:20px;width:2px;height:39px;background:#d0d0d0"></div>
 <div class="a" style="left:321px;top:16px;transform:scaleY(0.92);transform-origin:0 42px;font-size:36px;font-weight:bold;color:#555559;-webkit-text-stroke:0.8px #555559;line-height:50px;white-space:nowrap">成都金牌科技</div>
 <div class="a" style="left:1085.0px;top:23.5px;width:35px;height:35px;border-radius:50%;background:#f2f2f2"></div><svg class="a" style="left:1094.5px;top:33px" width="16" height="16" viewBox="0 0 16 16"><path fill="#777" d="M8 2.5c-4 0-7 2.4-7 5.5 0 1.7 .9 3.2 2.4 4.2L2.8 15l3.3-1.8c.6.1 1.2.2 1.9.2 4 0 7-2.4 7-5.5S12 2.5 8 2.5z"/><circle cx="5" cy="8" r=".9" fill="#f2f2f2"/><circle cx="8" cy="8" r=".9" fill="#f2f2f2"/><circle cx="11" cy="8" r=".9" fill="#f2f2f2"/></svg><div class="a" style="left:1134.0px;top:23.5px;width:35px;height:35px;border-radius:50%;background:#f2f2f2"></div><svg class="a" style="left:1143.5px;top:33px" width="16" height="16" viewBox="0 0 16 16"><path fill="#777" d="M1.5 3.5h13v10h-13z"/><path fill="none" stroke="#f2f2f2" stroke-width="1.2" d="M1.5 4l6.5 5 6.5-5"/></svg><div class="a" style="left:1183.0px;top:23.5px;width:35px;height:35px;border-radius:50%;background:#f2f2f2"></div><svg class="a" style="left:1192.5px;top:33px" width="16" height="16" viewBox="0 0 16 16"><path fill="#777" d="M4 13V9a4 4 0 0 1 8 0v4h1.5v1.5h-11V13z"/><path stroke="#777" stroke-width="1.2" d="M8 1v2.2M2.5 3.5l1.5 1.5M13.5 3.5L12 5M0.5 9h2M13.5 9h2"/></svg><div class="a" style="left:1232.0px;top:23.5px;width:35px;height:35px;border-radius:50%;background:#f2f2f2"></div><svg class="a" style="left:1241.5px;top:33px" width="16" height="16" viewBox="0 0 16 16"><path fill="#777" d="M6.5 1h3v5h2.5L8 10 4 6h2.5z"/><path fill="#777" d="M1 10h4l1.5 1.5h3L11 10h4v5H1z"/><path fill="#f2f2f2" d="M11 13h1v1h-1zM13 13h1v1h-1z"/></svg><div class="a" style="left:1281.0px;top:23.5px;width:35px;height:35px;border-radius:50%;background:#f2f2f2"></div><svg class="a" style="left:1290.5px;top:33px" width="16" height="16" viewBox="0 0 16 16"><circle cx="8" cy="5" r="3.3" fill="#777"/><path fill="#777" d="M2.5 15c0-4 2.2-5.8 5.5-5.8s5.5 1.8 5.5 5.8z"/></svg>
 <div class="a" style="left:1330px;top:31px;font-size:15px;color:#4a90d9;line-height:20px;white-space:nowrap">同舟化工</div>
 <svg class="a" style="left:1394px;top:38px" width="10" height="7" viewBox="0 0 10 7"><path d="M1 1.5 L5 5.5 L9 1.5" fill="none" stroke="#4a90d9" stroke-width="1.5"/></svg>
 <div class="a" style="left:1428px;top:6px;width:221px;height:67px;border:1px solid #c8c8c8;background:#fff"></div>
 <div class="a" style="left:1429px;top:7px;width:105px;height:65px;background:#6ccef5"></div>
 <div class="a" style="left:1439px;top:11px;font-size:14px;color:#fff;line-height:18px;font-weight:bold">星期四</div>
 <div class="a" style="left:1438px;top:26.5px;font-size:41px;color:#fff;line-height:44px;transform:scaleX(0.93);transform-origin:0 0">22</div>
 <div class="a" style="left:1491px;top:49px;font-size:15.5px;color:#fff;line-height:18px">7月</div>
 <div class="a" style="left:1550px;top:12px;font-size:14px;color:#777;line-height:18px">上午</div>
 <div class="a" style="left:1548px;top:26.5px;font-size:36px;color:#777;line-height:42px;transform:scaleX(0.93);transform-origin:0 0">10:23</div>
</div>
<div id="vs" class="a"><div class="a th"></div><svg class="a" style="left:5px;top:8px" width="11" height="6" viewBox="0 0 11 6"><path d="M0 6 L5.5 0 L11 6Z" fill="#505050"/></svg><svg class="a" style="left:5px;top:841px" width="11" height="6" viewBox="0 0 11 6"><path d="M0 0 L5.5 6 L11 0Z" fill="#505050"/></svg></div><div class="a" style="left:1447px;top:738px;width:190px;height:23px;border:1px solid #9aa3b5;border-left:none;background:#fff"></div><svg class="a" style="left:1426px;top:729px" width="36" height="36" viewBox="0 0 36 36"><g transform="rotate(-15 18 18)"><rect x="6.5" y="6.5" width="23" height="23" rx="3" fill="#f05520"/>
<path d="M23.5 11.2 Q16 9.2 11.5 12 Q8.6 14.5 12.5 16.3 L21 17.8 Q25.5 19 22 21.8 Q17 24.6 10.5 23.5" fill="none" stroke="#fff" stroke-width="3.4" stroke-linecap="round"/></g></svg><svg class="a" style="left:1462px;top:740px" width="172" height="19" viewBox="0 0 172 19">
<g fill="#1c70c8">
<path d="M8 1.5h2.2v3h6v9h-2.2v-1.2h-3.8v5.5H8v-5.5H4.2v1.2H2v-9h6zM4.2 6.6v3.6H8V6.6zm6 0v3.6H14V6.6z"/>
<circle cx="27" cy="8" r="2" fill="none" stroke="#1c70c8" stroke-width="1.3"/><path d="M32 11 Q35 10 34.5 14 Q33.5 16 31.5 16.5 Q33 14.5 32 13.5Z"/>
<circle cx="53" cy="9.5" r="7" fill="none" stroke="#1c70c8" stroke-width="1.6"/><circle cx="50.5" cy="7.5" r="1.1"/><circle cx="55.5" cy="7.5" r="1.1"/><path d="M49.5 11 Q53 14.5 56.5 11" fill="none" stroke="#1c70c8" stroke-width="1.4"/>
<rect x="72" y="1.5" width="5" height="10" rx="2.5"/><path d="M69.5 8 Q69.5 14 74.5 14 Q79.5 14 79.5 8" fill="none" stroke="#1c70c8" stroke-width="1.5"/><rect x="73.8" y="14" width="1.5" height="3"/><rect x="71" y="16.5" width="7" height="1.5"/>
<path fill-rule="evenodd" d="M88.5 3h17v12h-17zM90.5 5v8h13V5z"/><g><rect x="92" y="6.3" width="1.5" height="1.3"/><rect x="95" y="6.3" width="1.5" height="1.3"/><rect x="98" y="6.3" width="1.5" height="1.3"/><rect x="101" y="6.3" width="1.5" height="1.3"/><rect x="92" y="8.8" width="1.5" height="1.3"/><rect x="95" y="8.8" width="1.5" height="1.3"/><rect x="98" y="8.8" width="1.5" height="1.3"/><rect x="101" y="8.8" width="1.5" height="1.3"/><rect x="93" y="11" width="8" height="1.6"/></g>
</g>
<g fill="#a9b9cc"><circle cx="118" cy="5" r="3"/><path d="M113 16 Q113 9.5 118 9.5 Q121 9.5 122.5 11 V16Z"/><rect x="121" y="11.5" width="8" height="6" fill="none" stroke="#a9b9cc" stroke-width="1"/></g>
<path fill="#1c70c8" d="M134 3.5 L138 1.5 Q140.5 3.5 143 1.5 L147 3.5 L148.5 8 L145.5 8.5 V17 H135.5 V8.5 L132.5 8Z"/>
<g fill="#1c70c8"><rect x="155.5" y="3" width="6" height="6"/><rect x="163.8" y="3.8" width="5.5" height="5.5" fill="none" stroke="#1c70c8" stroke-width="1.5"/><rect x="155.5" y="11" width="6" height="6"/><rect x="163" y="11" width="6" height="6"/></g>
</svg>
</body></html>
